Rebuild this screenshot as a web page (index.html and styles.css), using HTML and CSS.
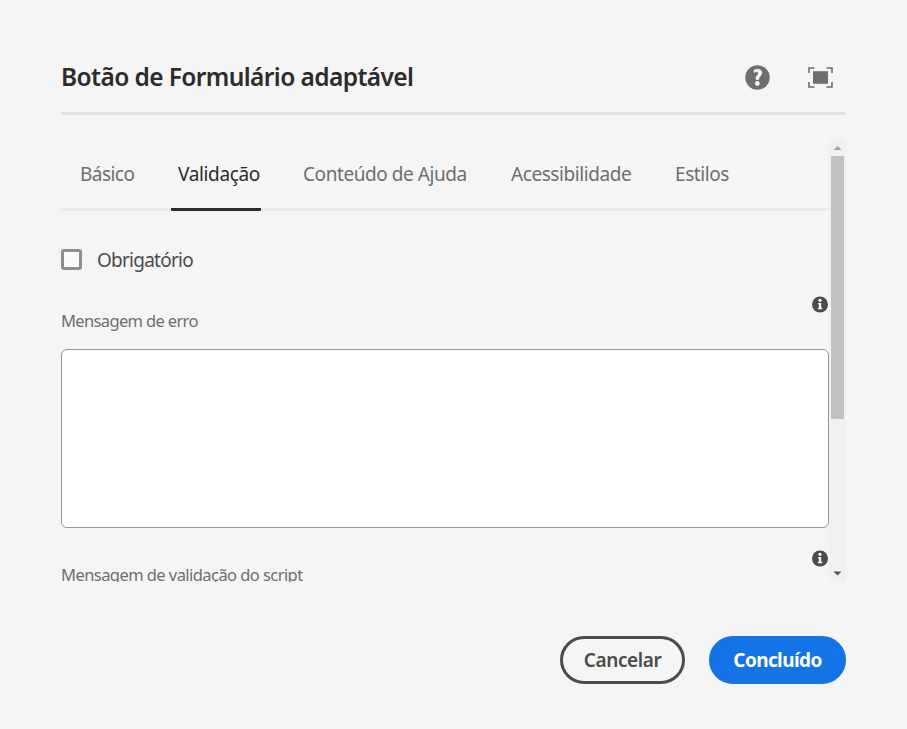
FILE: index.html
```html
<!DOCTYPE html>
<html lang="pt-BR">
<head>
<meta charset="utf-8">
<title>Botão de Formulário adaptável</title>
<link rel="stylesheet" href="styles.css">
</head>
<body>
<main class="dialog">
  <header class="header">
    <h1 class="title">Botão de Formulário adaptável</h1>
    <div class="actions">
      <svg class="help" width="25" height="25" viewBox="0 0 25 25"><circle cx="12.5" cy="12.5" r="12.2" fill="#6e6e6e"/><path d="M8.9 5.2Q10.7 4.2 12.7 4.2Q16.8 4.2 16.8 7.9Q16.8 9.7 14.9 11.4Q13.5 12.6 13.7 14.5H11.1Q10.4 12.3 12 10.7Q13.4 9.4 13.4 8.3Q13.4 6.6 11.8 6.6Q10.5 6.6 9.1 7.5Z" fill="#f5f5f5" stroke="#f5f5f5" stroke-width=".7"/><circle cx="12.3" cy="18.5" r="2.4" fill="#f5f5f5"/></svg>
      <svg class="expand" width="25" height="21" viewBox="0 0 25 21"><path d="M1 6V1H6.5M18.5 1H24V6M24 15V20H18.5M6.5 20H1V15" fill="none" stroke="#6e6e6e" stroke-width="1.6"/><path d="M5 4.2H20V16.8H5Z" fill="#6e6e6e"/></svg>
    </div>
  </header>
  <div class="viewport">
    <section class="content">
      <nav class="tabs">
        <a class="tab basic">Básico</a>
        <a class="tab valid selected">Validação</a>
        <a class="tab helpful">Conteúdo de Ajuda</a>
        <a class="tab access">Acessibilidade</a>
        <a class="tab styling">Estilos</a>
      </nav>
      <label class="check"><span class="box"></span><span class="check-label">Obrigatório</span></label>
      <div class="label-row first">
        <span class="label error">Mensagem de erro</span>
        <svg class="info" width="16" height="17" viewBox="0 -.5 16 17"><circle cx="8" cy="8" r="8" fill="#4b4b4b"/><circle cx="8" cy="3.8" r="1.6" fill="#f5f5f5"/><path d="M6 6.5H9.2V11.3H10.3V12.7H5.8V11.3H6.9V7.9H6Z" fill="#f5f5f5"/></svg>
      </div>
      <div class="textarea"></div>
      <div class="label-row second">
        <span class="label script">Mensagem de validação do script</span>
        <svg class="info" width="16" height="17" viewBox="0 -.5 16 17"><circle cx="8" cy="8" r="8" fill="#4b4b4b"/><circle cx="8" cy="3.8" r="1.6" fill="#f5f5f5"/><path d="M6 6.5H9.2V11.3H10.3V12.7H5.8V11.3H6.9V7.9H6Z" fill="#f5f5f5"/></svg>
      </div>
    </section>
    <div class="scrollbar">
      <svg class="arrow" width="17" height="17" viewBox="0 0 17 17"><path d="M4.5 11L8.5 7L12.5 11Z" fill="#a3a3a3"/></svg>
      <div class="thumb"></div>
      <svg class="arrow down" width="17" height="17" viewBox="0 0 17 17"><path d="M4.5 6.5H12.5L8.5 10.5Z" fill="#505050"/></svg>
    </div>
  </div>
  <footer class="footer">
    <button class="button cancel">Cancelar</button>
    <button class="button done">Concluído</button>
  </footer>
</main>
</body>
</html>
```
FILE: styles.css
```css
* { box-sizing: border-box; }
body { margin: 0; background: #f5f5f5; font-family: "Noto Sans", sans-serif; color: #4b4b4b; }
.dialog { width: 907px; height: 729px; padding: 42px 61px 0; overflow: hidden; }
.header { display: flex; justify-content: space-between; height: 73px; border-bottom: 3px solid #e1e1e1; }
.title { margin: 0; font-size: 24.5px; line-height: 70px; font-weight: 600; letter-spacing: -0.6px; color: #2c2c2c; white-space: nowrap; }
.actions { display: flex; align-items: center; gap: 38px; padding-right: 13px; }
.viewport { display: flex; margin-top: 24px; height: 443px; overflow: hidden; }
.content { width: 768px; flex: none; overflow: hidden; }
.tabs { display: flex; height: 72px; padding-left: 12px; gap: 28px; border-bottom: 3px solid #eaeaea; }
.tab { flex: none; height: 72px; padding: 0 0 0 7px; font-size: 19px; line-height: 71px; color: #6e6e6e; white-space: nowrap; letter-spacing: -0.43px; }
.basic { width: 70px; letter-spacing: -0.55px; }
.valid { width: 90px; letter-spacing: -0.35px; }
.helpful { width: 180px; margin-left: 7px; }
.access { width: 136px; }
.styling { width: 70px; }
.selected { color: #2c2c2c; border-bottom: 3px solid #2c2c2c; border-radius: 1px; }
.check { display: flex; align-items: flex-start; gap: 15px; height: 26px; margin-top: 36px; }
.box { width: 21px; height: 21px; margin-top: 2px; border: 3px solid #8e8e8e; border-radius: 3px; background: #fafafa; }
.check-label { font-size: 19px; line-height: 26px; letter-spacing: -0.75px; }
.label-row { display: flex; justify-content: space-between; align-items: flex-start; padding-right: 1px; }
.first { height: 53px; margin-top: 23px; }
.second { height: 53px; margin-top: 22px; }
.label { padding-top: 13px; font-size: 16.5px; line-height: 24px; color: #6e6e6e; white-space: nowrap; }
.error { letter-spacing: -0.65px; }
.script { letter-spacing: -0.56px; }
.info { flex: none; }
.textarea { height: 179px; border: 1px solid #959595; border-radius: 6px; background: #fff; }
.scrollbar { display: flex; flex-direction: column; align-items: center; width: 17px; height: 443px; background: #f1f1f1; }
.arrow { flex: none; }
.thumb { width: 13px; height: 263px; background: #c1c1c1; }
.down { margin-top: auto; }
.footer { display: flex; justify-content: flex-end; gap: 24px; margin-top: 54px; }
.button { height: 48px; padding: 0; border-radius: 24px; font: 600 19px/42px "Noto Sans", sans-serif; white-space: nowrap; letter-spacing: -0.4px; }
.cancel { width: 125px; border: 3px solid #4b4b4b; background: transparent; color: #4b4b4b; }
.done { width: 137px; border: 3px solid #1473e6; background: #1473e6; color: #fff; font-weight: 700; letter-spacing: -0.6px; }
```
